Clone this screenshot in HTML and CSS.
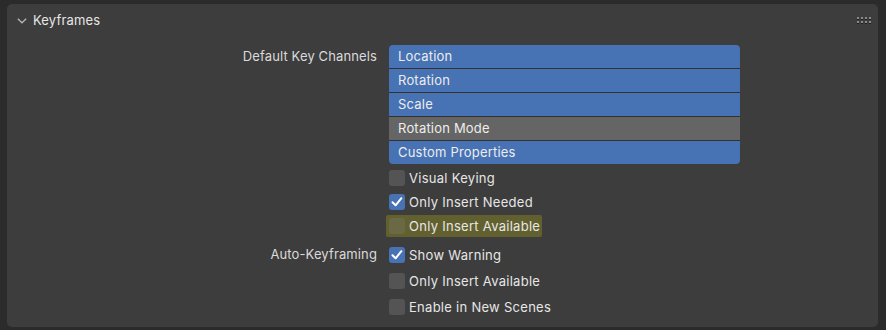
FILE: index.html
```html
<!DOCTYPE html>
<html>
<head>
<meta charset="utf-8">
<link rel="stylesheet" href="styles.css">
</head>
<body>
<div class="frame">
  <div class="panel">
    <div class="header">
      <svg class="chev" width="10" height="6" viewBox="0 0 10 6"><path d="M0.8 0.8 L5 4.8 L9.2 0.8" fill="none" stroke="#b5b5b5" stroke-width="1.3"/></svg>
      <span class="title">Keyframes</span>
      <div class="grip">
        <i></i><i></i><i></i><i></i><i></i><i></i><i></i><i></i>
      </div>
    </div>
    <div class="section first">
      <div class="label">Default Key Channels</div>
      <div class="content">
        <div class="list">
          <div class="item on">Location</div>
          <div class="item on">Rotation</div>
          <div class="item on">Scale</div>
          <div class="item off">Rotation Mode</div>
          <div class="item on">Custom Properties</div>
        </div>
        <div class="checks">
          <div class="check"><span class="box"></span>Visual Keying</div>
          <div class="check"><span class="box checked"><svg width="16" height="16" viewBox="0 0 16 16"><path d="M3.5 8.3 L6.6 11.3 L12.4 4.2" fill="none" stroke="#fff" stroke-width="2" stroke-linecap="round" stroke-linejoin="round"/></svg></span>Only Insert Needed</div>
          <div class="check hl"><span class="box"></span>Only Insert Available</div>
        </div>
      </div>
    </div>
    <div class="section second">
      <div class="label">Auto-Keyframing</div>
      <div class="content">
        <div class="check tall"><span class="box checked"><svg width="16" height="16" viewBox="0 0 16 16"><path d="M3.5 8.3 L6.6 11.3 L12.4 4.2" fill="none" stroke="#fff" stroke-width="2" stroke-linecap="round" stroke-linejoin="round"/></svg></span>Show Warning</div>
        <div class="check tall"><span class="box"></span>Only Insert Available</div>
        <div class="check tall"><span class="box"></span>Enable in New Scenes</div>
      </div>
    </div>
  </div>
</div>
</body>
</html>
```
FILE: styles.css
```css
html, body {
  margin: 0;
  padding: 0;
  background: #2b2b2b;
  width: 886px;
  height: 330px;
  overflow: hidden;
  font-family: Inter, "DejaVu Sans", sans-serif;
  font-size: 13px;
}
.frame {
  padding: 4px 8px 0 7px;
}
.panel {
  background: #3d3d3d;
  border-radius: 5px;
  height: 323px;
  box-sizing: border-box;
}
.header {
  height: 32px;
  display: flex;
  align-items: center;
  padding-left: 10px;
  padding-right: 7px;
}
.chev {
  display: block;
  margin-right: 6px;
  margin-top: 1px;
}
.title {
  color: #e6e6e6;
  font-size: 13px;
  letter-spacing: 0.15px;
}
.grip {
  margin-left: auto;
  display: grid;
  grid-template-columns: repeat(4, 2px);
  grid-template-rows: repeat(2, 2px);
  gap: 2px;
  margin-top: -1px;
}
.grip i {
  display: block;
  width: 2px;
  height: 2px;
  background: #8a8a8a;
  box-shadow: 0 1px 0 #1e1e1e;
}
.section {
  display: grid;
  grid-template-columns: 370px 351px;
  column-gap: 12px;
}
.section.first {
  padding-top: 9px;
}
.section.second {
  padding-top: 4px;
}
.label {
  text-align: right;
  color: #dadada;
  line-height: 22px;
  letter-spacing: 0.12px;
}
.second .label {
  line-height: 25px;
}
.list {
  display: flex;
  flex-direction: column;
  gap: 1px;
  background: #323232;
  border-radius: 4px;
  overflow: hidden;
}
.item {
  height: 23px;
  line-height: 22px;
  padding-left: 9px;
  color: #ededed;
  letter-spacing: 0.2px;
  box-sizing: border-box;
}
.item.on { background: #4772b3; }
.item.off { background: #656565; }
.checks {
  padding-top: 2px;
}
.check {
  height: 24px;
  display: flex;
  align-items: center;
  color: #e6e6e6;
  letter-spacing: 0.28px;
}
.check.tall {
  height: 26px;
}
.box {
  width: 16px;
  height: 16px;
  border-radius: 3px;
  background: #545454;
  margin-right: 4px;
  flex: none;
  display: block;
}
.box svg { display: block; }
.box.checked {
  background: #4772b3;
}
.check.hl {
  margin-left: -3px;
  padding-left: 3px;
  width: 153px;
  height: 22px;
  margin-top: 1px;
  margin-bottom: 1px;
  background: #62602f;
  border-radius: 2px;
}
.check.hl .box {
  background: #6b6945;
}
```
